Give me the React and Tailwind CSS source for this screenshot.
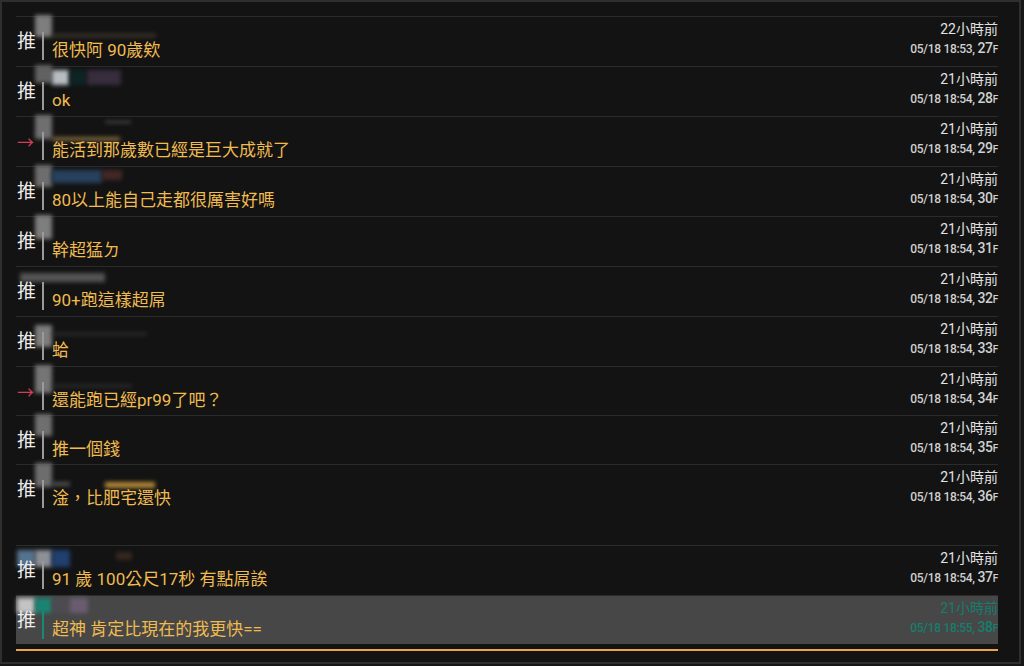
import React from "react";

const rows = [
  { tag: "推", text: "很快阿 90歲欸", time: "22小時前", date: "05/18 18:53,", f: "27",
    blobs: [[19, -2, 17, 22, "#8a8a8a"], [36, 17, 104, 3, "#4a3f33"]] },
  { tag: "推", text: "ok", time: "21小時前", date: "05/18 18:54,", f: "28",
    blobs: [[19, -2, 17, 18, "#6a6a6a"], [36, 3, 17, 15, "#c9d0d6"], [54, 3, 16, 15, "#0e2626"], [71, 3, 34, 15, "#3b3042"]] },
  { tag: "→", text: "能活到那歲數已經是巨大成就了", time: "21小時前", date: "05/18 18:54,", f: "29",
    blobs: [[19, -2, 17, 24, "#7a7a7a"], [36, 20, 68, 4, "#8a7142"], [89, 4, 26, 2, "#5a5a5a"]] },
  { tag: "推", text: "80以上能自己走都很厲害好嗎", time: "21小時前", date: "05/18 18:54,", f: "30",
    blobs: [[19, -2, 17, 22, "#777"], [36, 3, 50, 13, "#2a4666"], [86, 3, 20, 10, "#4a2a2a"]] },
  { tag: "推", text: "幹超猛ㄉ", time: "21小時前", date: "05/18 18:54,", f: "31",
    blobs: [[19, -2, 17, 24, "#8a8a8a"]] },
  { tag: "推", text: "90+跑這樣超屌", time: "21小時前", date: "05/18 18:54,", f: "32",
    blobs: [[4, 6, 85, 9, "#5c5c5c"]] },
  { tag: "推", text: "蛤", time: "21小時前", date: "05/18 18:54,", f: "33",
    blobs: [[19, 8, 17, 22, "#8a8a8a"], [36, 16, 95, 2, "#3a3a3a"]] },
  { tag: "→", text: "還能跑已經pr99了吧？", time: "21小時前", date: "05/18 18:54,", f: "34", h: "h-[49px]",
    blobs: [[19, -2, 17, 28, "#808080"], [36, 18, 80, 2, "#3a3a3a"]] },
  { tag: "推", text: "推一個錢", time: "21小時前", date: "05/18 18:54,", f: "35", h: "h-[49px]",
    blobs: [[19, -2, 17, 22, "#7a7a7a"]] },
  { tag: "推", text: "淦，比肥宅還快", time: "21小時前", date: "05/18 18:54,", f: "36", h: "h-[81px]",
    blobs: [[19, -2, 17, 24, "#777"], [36, 17, 18, 4, "#5a5a5a"], [89, 17, 50, 6, "#c5953c"]] },
  { tag: "推", text: "91 歲 100公尺17秒 有點屌誒", time: "21小時前", date: "05/18 18:54,", f: "37",
    blobs: [[1, 4, 18, 17, "#5d7d9c"], [19, 4, 17, 17, "#9a9fa6"], [36, 4, 18, 17, "#23457a"], [100, 6, 16, 8, "#3a2a20"]] },
  { tag: "推", text: "超神 肯定比現在的我更快==", time: "21小時前", date: "05/18 18:55,", f: "38", hl: true, h: "h-[49px]",
    blobs: [[1, 2, 18, 15, "#d2d2d2"], [19, 2, 17, 15, "#178a76"], [36, 2, 34, 15, "#4e4c52"], [54, 2, 18, 15, "#6d5e72"]] },
];

function Row({ r }) {
  const hl = r.hl;
  return (
    <div
      className={`relative flex border-t border-[#2b2b2b] ${r.h || "h-[50px]"} ${hl ? "bg-[#474747]" : ""}`}
    >
      {r.blobs.map((b, i) => (
        <div
          key={i}
          className="absolute blur-[2px] opacity-90"
          style={{ left: b[0], top: b[1], width: b[2], height: b[3], background: b[4] }}
        />
      ))}
      <div
        className={`relative w-[26px] pl-[1px] pt-[14px] leading-[22px] ${
          r.tag === "→" ? "text-[17px] text-[#cf3f58] pt-[15px]" : "text-[19px] text-[#ececec]"
        }`}
      >
        {r.tag}
      </div>
      <div className={`relative mt-[15px] h-[28px] w-[2px] ${hl ? "bg-[#178a76]" : "bg-[#9a9a9a]"}`} />
      <div className="relative ml-[8px] pt-[21px] text-[17px] leading-[24px] text-[#f0bb50]">{r.text}</div>
      <div className={`relative ml-auto pt-[3px] text-right ${hl ? "text-[#157e6c]" : ""}`}>
        <div className={`text-[14px] leading-[18px] ${hl ? "" : "text-[#e2e2e2]"}`}>{r.time}</div>
        <div className={`font-medium leading-[20px] tracking-[-0.3px] ${hl ? "" : "text-[#d0d0d0]"}`}>
          <span className="text-[12px]">{r.date}{"\u00a0"}</span>
          <span className="text-[14px]">{r.f}</span>
          <span className="text-[10px]">F</span>
        </div>
      </div>
    </div>
  );
}

export default function App() {
  return (
    <div
      className="h-[666px] w-[1024px] overflow-hidden bg-[#161616]"
      style={{ fontFamily: "Roboto, 'Noto Sans CJK TC', sans-serif" }}
    >
      <div className="h-[664px] w-[1021px] border-2 border-[#2f2f2f] bg-[#131313] pl-[14px] pt-[14px]">
        <div className="flex w-[982px] flex-col">
          {rows.map((r, i) => (
            <Row key={i} r={r} />
          ))}
          <div className="mt-[5px] h-[2px] bg-[#e7a548]" />
        </div>
      </div>
    </div>
  );
}
